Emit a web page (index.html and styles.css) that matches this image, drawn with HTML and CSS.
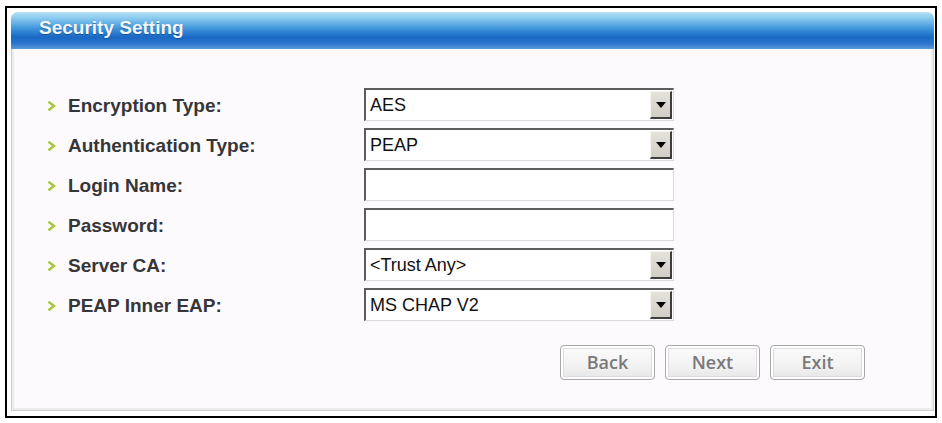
FILE: index.html
```html
<!DOCTYPE html>
<html>
<head>
<meta charset="utf-8">
<link rel="stylesheet" href="styles.css">
</head>
<body>
<div class="frame">
  <div class="panel">
    <div class="header">Security Setting</div>
    <div class="form">
      <div class="label"><svg class="arrow" width="8" height="10" viewBox="0 0 8 10"><path d="M1.5 1.5 L6 5 L1.5 8.5" fill="none" stroke="#a6c83a" stroke-width="2.6" stroke-linecap="square"/></svg>Encryption Type:</div>
      <div class="select"><span class="value">AES</span><span class="drop"><span class="tri"></span></span></div>

      <div class="label"><svg class="arrow" width="8" height="10" viewBox="0 0 8 10"><path d="M1.5 1.5 L6 5 L1.5 8.5" fill="none" stroke="#a6c83a" stroke-width="2.6" stroke-linecap="square"/></svg>Authentication Type:</div>
      <div class="select"><span class="value">PEAP</span><span class="drop"><span class="tri"></span></span></div>

      <div class="label"><svg class="arrow" width="8" height="10" viewBox="0 0 8 10"><path d="M1.5 1.5 L6 5 L1.5 8.5" fill="none" stroke="#a6c83a" stroke-width="2.6" stroke-linecap="square"/></svg>Login Name:</div>
      <input class="field" type="text">

      <div class="label"><svg class="arrow" width="8" height="10" viewBox="0 0 8 10"><path d="M1.5 1.5 L6 5 L1.5 8.5" fill="none" stroke="#a6c83a" stroke-width="2.6" stroke-linecap="square"/></svg>Password:</div>
      <input class="field" type="password">

      <div class="label"><svg class="arrow" width="8" height="10" viewBox="0 0 8 10"><path d="M1.5 1.5 L6 5 L1.5 8.5" fill="none" stroke="#a6c83a" stroke-width="2.6" stroke-linecap="square"/></svg>Server CA:</div>
      <div class="select"><span class="value">&lt;Trust Any&gt;</span><span class="drop"><span class="tri"></span></span></div>

      <div class="label"><svg class="arrow" width="8" height="10" viewBox="0 0 8 10"><path d="M1.5 1.5 L6 5 L1.5 8.5" fill="none" stroke="#a6c83a" stroke-width="2.6" stroke-linecap="square"/></svg>PEAP Inner EAP:</div>
      <div class="select"><span class="value">MS CHAP V2</span><span class="drop"><span class="tri"></span></span></div>
    </div>
    <div class="buttons">
      <button class="btn">Back</button>
      <button class="btn">Next</button>
      <button class="btn">Exit</button>
    </div>
  </div>
</div>
</body>
</html>
```

FILE: styles.css
```css
html, body {
  margin: 0;
  padding: 0;
  background: #ffffff;
}

.frame {
  margin: 6px 0 0 5px;
  width: 932px;
  height: 412px;
  box-sizing: border-box;
  border: 2px solid #000;
  padding: 4px 1px 5px 4px;
  background: #ffffff;
}

.panel {
  height: 100%;
  box-sizing: border-box;
  border: 1px solid #cfcfd2;
  border-top: none;
  border-radius: 7px 7px 0 0;
  background: #fcfafd;
  box-shadow: inset 2px 0 0 #ecebee, inset -2px 0 0 #ecebee, inset 0 -2px 0 #ecebee;
  display: flex;
  flex-direction: column;
}

.header {
  height: 37px;
  border-radius: 7px 7px 0 0;
  margin: 0 -1px;
  background: linear-gradient(to bottom, #b4e4f6 0%, #86c8ee 18%, #3f94dc 45%, #1a68c4 68%, #2a76cc 85%, #5a9ad8 100%);
  padding-left: 28px;
  font-family: "Liberation Sans", Arial, sans-serif;
  font-weight: bold;
  font-size: 19px;
  line-height: 32px;
  color: #f2f6fc;
  text-shadow: 0 1px 1px rgba(10, 50, 110, 0.55);
}

.form {
  display: grid;
  grid-template-columns: 316px 310px;
  grid-auto-rows: 33px;
  row-gap: 7px;
  padding: 39px 0 0 36px;
}

.label {
  display: flex;
  align-items: center;
  gap: 12px;
  font-family: "Liberation Sans", Arial, sans-serif;
  font-weight: bold;
  font-size: 19px;
  color: #363638;
  padding-top: 2px;
}

.arrow {
  flex: none;
}

.select, .field {
  box-sizing: border-box;
  height: 33px;
  width: 310px;
  border-style: solid;
  border-width: 2px 1px 1px 2px;
  border-color: #5c5c5c #d9d9d9 #d9d9d9 #5c5c5c;
  background: #ffffff;
  margin: 0;
  padding: 0;
}

.select {
  display: flex;
  align-items: center;
}

.value {
  flex: 1;
  padding-left: 4px;
  padding-top: 1px;
  font-family: "Liberation Sans", Arial, sans-serif;
  font-size: 18px;
  color: #111;
}

.drop {
  align-self: stretch;
  width: 22px;
  margin: 1px 1px 1px 0;
  box-sizing: border-box;
  border-style: solid;
  border-width: 1px 2px 2px 1px;
  border-color: #f4f4f0 #3e3e3e #3e3e3e #f4f4f0;
  background: linear-gradient(to bottom, #e4e2da, #d0cec4);
  display: flex;
  align-items: center;
  justify-content: center;
}

.tri {
  width: 0;
  height: 0;
  border-left: 5px solid transparent;
  border-right: 5px solid transparent;
  border-top: 6px solid #000;
}

.field {
  outline: none;
}

.buttons {
  display: flex;
  justify-content: flex-end;
  gap: 10px;
  margin-top: 24px;
  padding-right: 68px;
}

.btn {
  width: 95px;
  height: 35px;
  box-sizing: border-box;
  border: 1px solid #a8a8aa;
  border-radius: 4px;
  background: linear-gradient(to bottom, #fbfbfb 0%, #f2f2f2 60%, #e6e6e8 100%);
  box-shadow: inset 0 0 0 2px #ffffff, inset 0 0 0 3px #dcdcde;
  font-family: "Open Sans", "Liberation Sans", sans-serif;
  font-weight: 600;
  font-size: 18px;
  color: #7a7a7c;
  padding: 0;
  line-height: 33px;
}
```
